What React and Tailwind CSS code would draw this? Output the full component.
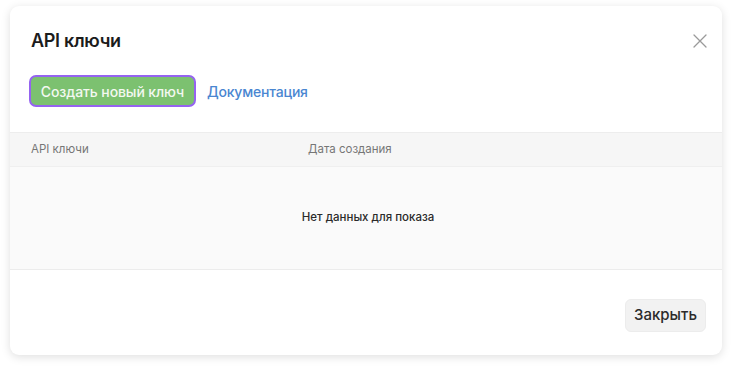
import React from "react";

function CloseIcon() {
  return (
    <svg width="14" height="14" viewBox="0 0 14 14" fill="none">
      <path d="M1 1L13 13M13 1L1 13" stroke="#9a9a9a" strokeWidth="1.3" strokeLinecap="round" />
    </svg>
  );
}

export default function App() {
  return (
    <div className="w-[732px] h-[370px] bg-white pl-[10px] pt-[6px] font-['Inter','Liberation_Sans',sans-serif]">
      <div className="w-[712px] h-[349px] bg-white rounded-[9px] shadow-[0_2px_10px_rgba(0,0,0,0.13)] flex flex-col overflow-hidden">
        <div className="flex items-center justify-between pl-[21px] pr-[15px] pt-[24px]">
          <h2 className="text-[18px] leading-[22px] font-semibold text-[#1c1c1c] tracking-[-0.3px]">API ключи</h2>
          <button className="w-[14px] h-[14px] flex items-center justify-center">
            <CloseIcon />
          </button>
        </div>
        <div className="flex items-center gap-[11px] pl-[19px] mt-[23px]">
          <button className="h-[32px] w-[167px] rounded-[7px] border-2 border-[#9563f0] bg-[#7cc170] text-[#f3f8f1] text-[14px] font-medium tracking-[-0.1px]">
            Создать новый ключ
          </button>
          <a className="text-[14px] font-medium text-[#4a86d1] tracking-[-0.2px]">Документация</a>
        </div>
        <div className="mt-[25px] border-t border-[#ededed]">
          <div className="grid grid-cols-[298px_1fr] h-[34px] items-center bg-[#f6f6f6] text-[11.5px] text-[#767676] border-b border-[#efefef]">
            <span className="pl-[21px]">API ключи</span>
            <span>Дата создания</span>
          </div>
          <div className="h-[103px] bg-[#fafafa] flex items-center justify-center border-b border-[#ececec]">
            <span className="text-[11.5px] font-medium text-[#2a2a2a] ml-[4px]">Нет данных для показа</span>
          </div>
        </div>
        <div className="flex justify-end pt-[29px] pr-[16px]">
          <button className="h-[33px] w-[81px] rounded-[6px] bg-[#f2f2f2] border border-[#ececec] text-[15px] text-[#2b2b2b] font-medium">
            Закрыть
          </button>
        </div>
      </div>
    </div>
  );
}
